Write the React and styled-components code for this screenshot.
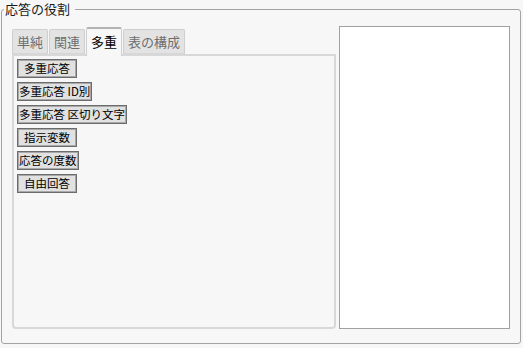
import React, { useState } from "react";
import styled, { createGlobalStyle } from "styled-components";

const GlobalStyle = createGlobalStyle`
  html, body {
    margin: 0;
    padding: 0;
    background: #f7f7f7;
    font-family: "Noto Sans CJK JP", "Noto Sans", sans-serif;
  }
  body {
    padding-top: 2px;
  }
`;

const tabs = ["単純", "関連", "多重", "表の構成"];
const roles = [
  "多重応答",
  "多重応答 ID別",
  "多重応答 区切り文字",
  "指示変数",
  "応答の度数",
  "自由回答",
];

const App = () => {
  const [active, setActive] = useState(2);
  return (
    <>
      <GlobalStyle />
      <Group>
        <Legend>応答の役割</Legend>
        <Body>
          <LeftCol>
            <TabBar>
              {tabs.map((t, i) => (
                <Tab key={t} $active={i === active} onClick={() => setActive(i)}>
                  {t}
                </Tab>
              ))}
            </TabBar>
            <Panel>
              {roles.map((r) => (
                <RoleButton key={r}>{r}</RoleButton>
              ))}
            </Panel>
          </LeftCol>
          <ListBox />
        </Body>
      </Group>
    </>
  );
};

const Group = styled.fieldset`
  margin: 0 2px 0 1px;
  padding: 10px 10px 14px 10px;
  border: 1px solid #a3a3a3;
  border-radius: 3px;
  min-width: 0;
`;

const Legend = styled.legend`
  padding: 0 5px 0 1px;
  margin-left: -8px;
  font-size: 13px;
  line-height: 14px;
  color: #1a1a1a;
`;

const Body = styled.div`
  display: flex;
  gap: 3px;
  height: 303px;
`;

const LeftCol = styled.div`
  width: 324px;
  display: flex;
  flex-direction: column;
`;

const TabBar = styled.div`
  display: flex;
  align-items: flex-end;
  gap: 1px;
  height: 28px;
  position: relative;
  z-index: 1;
`;

const Tab = styled.div`
  box-sizing: border-box;
  height: ${(p) => (p.$active ? "29px" : "25px")};
  margin-bottom: ${(p) => (p.$active ? "-2px" : "0")};
  padding: 0 4px;
  display: flex;
  align-items: center;
  justify-content: center;
  font-size: 13px;
  color: ${(p) => (p.$active ? "#000" : "#6e6e6e")};
  background: ${(p) => (p.$active ? "#f7f7f7" : "#e3e3e3")};
  border: 1px solid #cfcfcf;
  border-top: ${(p) => (p.$active ? "2px solid #b3b3b3" : "1px solid #cfcfcf")};
  border-bottom: ${(p) => (p.$active ? "none" : "1px solid #d6d6d6")};
  border-radius: 2px 2px 0 0;
  padding-bottom: ${(p) => (p.$active ? "3px" : "0")};
  cursor: default;
`;

const Panel = styled.div`
  flex: 1;
  box-sizing: border-box;
  border: 2px solid #d8d8d8;
  border-radius: 0 0 4px 4px;
  padding: 3px 3px;
  display: flex;
  flex-direction: column;
  align-items: flex-start;
  gap: 4px;
`;

const RoleButton = styled.button`
  box-sizing: border-box;
  height: 19px;
  min-width: 60px;
  padding: 0 1px;
  font-family: inherit;
  font-size: 11.5px;
  line-height: 15px;
  color: #000;
  background: #e1e1e1;
  border: 1px solid #6c6c6c;
  box-shadow: inset 0 0 0 1px #a9a9a9;
  border-radius: 0;
  white-space: nowrap;
  cursor: default;
`;

const ListBox = styled.div`
  flex: 1;
  box-sizing: border-box;
  background: #fff;
  border: 1px solid #a0a0a0;
`;

export default App;
